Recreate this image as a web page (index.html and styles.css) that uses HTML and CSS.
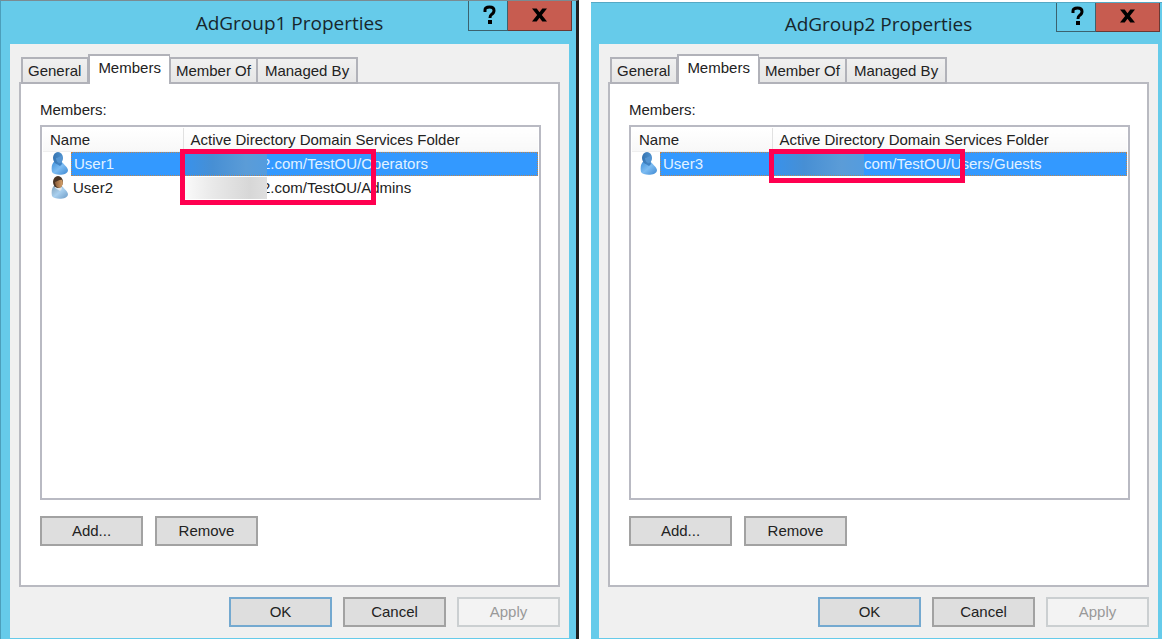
FILE: index.html
```html
<!DOCTYPE html>
<html lang="en">
<head>
<meta charset="utf-8">
<title>AdGroup Properties</title>
<link rel="stylesheet" href="styles.css">
</head>
<body>
<svg width="0" height="0" class="defs" aria-hidden="true">
  <defs>
    <linearGradient id="blueBody" x1="0" y1="0" x2="1" y2="1"><stop offset="0" stop-color="#3f8fd8"/><stop offset="0.5" stop-color="#7dbcf2"/><stop offset="1" stop-color="#3d88d2"/></linearGradient>
    <linearGradient id="blueHead" x1="0" y1="0" x2="1" y2="0"><stop offset="0" stop-color="#3573b0"/><stop offset="1" stop-color="#4f92cf"/></linearGradient>
    <linearGradient id="paleBody" x1="0" y1="0" x2="1" y2="1"><stop offset="0" stop-color="#7e9db5"/><stop offset="0.5" stop-color="#a9d0ef"/><stop offset="1" stop-color="#6d9bc6"/></linearGradient>
    <linearGradient id="skin" x1="0" y1="0" x2="1" y2="0"><stop offset="0" stop-color="#8a5c38"/><stop offset="1" stop-color="#d9a46c"/></linearGradient>
    <symbol id="user-blue" viewBox="0 0 17 23">
      <path d="M1 20C0 15 1 11 4 9H10C12 12 16 14 17 18C17 24 3 24 1 20Z" fill="url(#blueBody)"/>
      <path d="M4 9H10L11 12L9 14L4 11Z" fill="#3f82c4"/>
      <ellipse cx="7" cy="6" rx="5" ry="6" fill="url(#blueHead)"/>
      <path d="M5 6C7 6 9 4 11 4C12 7 11 10 9 11C7 11 5 9 5 6Z" fill="#5595d2"/>
    </symbol>
    <symbol id="user-color" viewBox="0 0 17 23">
      <path d="M1 20C0 15 1 11 4 9H10C12 12 16 14 17 18C17 24 3 24 1 20Z" fill="url(#paleBody)"/>
      <path d="M4 10H10L11 13L9 15L4 12Z" fill="#dfe8ee"/>
      <ellipse cx="7" cy="6" rx="5" ry="6" fill="#4a3525"/>
      <path d="M4 6C6 6 9 3 11 4C13 7 11 11 9 12C6 12 4 9 4 6Z" fill="url(#skin)"/>
    </symbol>
  </defs>
</svg>
<main class="desktop">
  <section class="window window-first" aria-labelledby="title1">
    <header class="titlebar">
      <h1 class="title" id="title1">AdGroup1 Properties</h1>
      <div class="caption">
        <button class="cap help" type="button" aria-label="Help"><svg width="13" height="20" viewBox="0 0 13 20"><path d="M2 7V5Q2 2 6.500 2Q11 2 11 5.500Q11 8 8.500 9.500Q7 10.500 7 13" fill="none" stroke="#000" stroke-width="3"/><rect x="5" y="15" width="4" height="4"/></svg></button>
        <button class="cap close" type="button" aria-label="Close"><svg width="15" height="14" viewBox="0 0 16 14"><path d="M0 0H5L8 4L11 0H16L10.500 7L16 14H11L8 10L5 14H0L5.500 7Z"/></svg></button>
      </div>
    </header>
    <div class="client">
      <nav class="tabs" aria-label="Property pages">
        <button class="tab" type="button">General</button>
        <button class="tab active" type="button">Members</button>
        <button class="tab" type="button">Member Of</button>
        <button class="tab" type="button">Managed By</button>
      </nav>
      <div class="panel">
        <h2 class="label">Members:</h2>
        <div class="list">
          <table class="members">
            <thead><tr><th class="name-col">Name</th><th>Active Directory Domain Services Folder</th></tr></thead>
            <tbody>
              <tr class="selected"><td class="name-cell"><div class="name"><svg class="icon" aria-hidden="true"><use href="#user-blue"/></svg><span class="text">User1</span></div></td><td><div class="folder"><span class="redact blue"></span><span class="tuck">2.com/TestOU/Operators</span></div></td></tr>
              <tr><td class="name-cell"><div class="name"><svg class="icon" aria-hidden="true"><use href="#user-color"/></svg><span class="text">User2</span></div></td><td><div class="folder"><span class="redact gray"></span><span class="tuck">2.com/TestOU/Admins</span></div></td></tr>
            </tbody>
          </table>
          <div class="mark mark-two"></div>
        </div>
        <div class="actions">
          <button class="btn" type="button">Add...</button>
          <button class="btn" type="button">Remove</button>
        </div>
      </div>
      <footer class="footer">
        <button class="btn default" type="button">OK</button>
        <button class="btn" type="button">Cancel</button>
        <button class="btn" type="button" disabled>Apply</button>
      </footer>
    </div>
  </section>
  <section class="window window-second" aria-labelledby="title2">
    <header class="titlebar">
      <h1 class="title" id="title2">AdGroup2 Properties</h1>
      <div class="caption">
        <button class="cap help" type="button" aria-label="Help"><svg width="13" height="20" viewBox="0 0 13 20"><path d="M2 7V5Q2 2 6.500 2Q11 2 11 5.500Q11 8 8.500 9.500Q7 10.500 7 13" fill="none" stroke="#000" stroke-width="3"/><rect x="5" y="15" width="4" height="4"/></svg></button>
        <button class="cap close" type="button" aria-label="Close"><svg width="15" height="14" viewBox="0 0 16 14"><path d="M0 0H5L8 4L11 0H16L10.500 7L16 14H11L8 10L5 14H0L5.500 7Z"/></svg></button>
      </div>
    </header>
    <div class="client">
      <nav class="tabs" aria-label="Property pages">
        <button class="tab" type="button">General</button>
        <button class="tab active" type="button">Members</button>
        <button class="tab" type="button">Member Of</button>
        <button class="tab" type="button">Managed By</button>
      </nav>
      <div class="panel">
        <h2 class="label">Members:</h2>
        <div class="list">
          <table class="members">
            <thead><tr><th class="name-col">Name</th><th>Active Directory Domain Services Folder</th></tr></thead>
            <tbody>
              <tr class="selected"><td class="name-cell"><div class="name"><svg class="icon" aria-hidden="true"><use href="#user-blue"/></svg><span class="text">User3</span></div></td><td><div class="folder"><span class="redact blue wide"></span><span>com/TestOU/Users/Guests</span></div></td></tr>
            </tbody>
          </table>
          <div class="mark mark-one"></div>
        </div>
        <div class="actions">
          <button class="btn" type="button">Add...</button>
          <button class="btn" type="button">Remove</button>
        </div>
      </div>
      <footer class="footer">
        <button class="btn default" type="button">OK</button>
        <button class="btn" type="button">Cancel</button>
        <button class="btn" type="button" disabled>Apply</button>
      </footer>
    </div>
  </section>
</main>
</body>
</html>
```

FILE: styles.css
```css
* { box-sizing: border-box; }

body {
  margin: 0;
  background: #fff;
  color: #222;
  font: 15px/18px "Liberation Sans", Arial, sans-serif;
}

button { font: inherit; color: inherit; }

.defs { position: absolute; }

.desktop {
  display: grid;
  grid-template-columns: 579fr 571fr;
  column-gap: 12px;
  min-height: 100vh;
}

.window {
  display: flex;
  flex-direction: column;
  background: #66cbea;
}

.window-first {
  border-top: 1px solid #7a8b92;
  border-left: 1px solid #4c9fbb;
  border-right: 3px solid #1f1f1f;
  padding: 0 7px 1px 9px;
}

.window-second {
  margin-top: 2px;
  border-top: 1px solid #55a9c5;
  padding: 0 4px 1px 8px;
}

.titlebar {
  display: grid;
  grid-template-columns: minmax(102px, 1fr) auto minmax(102px, 1fr);
  height: 43px;
}

.window-second .titlebar { height: 41px; }

.title {
  grid-column: 2;
  margin: 0;
  align-self: center;
  font: 19px/28px "Open Sans", "Noto Sans", sans-serif;
  color: #17262c;
}

.caption {
  display: flex;
  justify-self: end;
  height: 30px;
}

.window-first .caption { margin-right: -3px; }
.window-second .caption { margin-right: -2px; height: 29px; }

.cap {
  display: flex;
  align-items: center;
  justify-content: center;
  padding: 0 0 2px;
  border: 1px solid #3b626f;
  border-top: 0;
  background: #66cbea;
}

.help { width: 40px; padding-left: 2px; }
.close { width: 64px; border-color: #6b3833; border-left: 0; background: #c75c50; }

.client {
  flex: 1;
  display: flex;
  flex-direction: column;
  padding: 10px 9px 11px;
  background: #f0f0f0;
}

.tabs {
  position: relative;
  display: flex;
  align-items: flex-end;
  padding-left: 2px;
  margin-bottom: -2px;
}

.tab {
  height: 27px;
  padding: 0 5px;
  border: 2px solid #b1b2b9;
  border-right-width: 1px;
  border-left-width: 1px;
  background: linear-gradient(#f0f0f0, #e6e6e6);
  white-space: nowrap;
}

.tab:first-child { padding: 0 6px 0 5px; border-left-width: 2px; }
.tab:last-child { padding: 0 7px; border-right-width: 2px; }

.tab.active {
  height: 30px;
  padding: 0 8px 4px;
  border-bottom: 0;
  border-left-width: 2px;
  background: #fff;
}

.panel {
  flex: 1;
  display: flex;
  flex-direction: column;
  padding: 17px 17px 39px 19px;
  border: 2px solid #b9bac1;
  background: #fff;
}

.label {
  margin: 0 0 6px;
  font-size: 15px;
  font-weight: 400;
  line-height: 18px;
}

.list {
  position: relative;
  flex: 1;
  padding: 1px;
  border: 2px solid #b9bac3;
  background: #fff;
}

.members {
  width: 100%;
  border-collapse: collapse;
  table-layout: fixed;
}

.members th {
  height: 23px;
  padding: 1px 0 0 7px;
  background: linear-gradient(#fff, #f8f8f8);
  border-bottom: 1px solid #efefef;
  font-weight: 400;
  text-align: left;
}

.members .name-col {
  width: 140px;
  border-right: 1px solid #e1e1e1;
}

.members td { height: 24px; padding: 0; }

.name, .folder {
  display: flex;
  align-items: center;
  height: 24px;
}

.icon { width: 17px; height: 23px; margin: 0 3px 0 8px; }

.name .text {
  flex: 1;
  height: 24px;
  padding-left: 2px;
  line-height: 24px;
}

.selected .text, .selected .folder {
  border: 1px dotted #bb8550;
  border-width: 1px 0;
  background: #3399ff;
  color: #e2f2ff;
  line-height: 22px;
}

.selected .text { border-left-width: 1px; }
.selected .folder { border-right-width: 1px; }

.redact {
  position: relative;
  z-index: 1;
  flex: none;
  width: 84px;
  height: 22px;
}

.wide { width: 92px; }
.blue { background: linear-gradient(90deg, #3792ed, #478fd4 35%, #5b9cd7 75%, #549cdf); }
.gray { background: linear-gradient(90deg, #fbfbfb, #e9e9e9 35%, #d7d7d7 80%, #dfdfdf); }

.tuck { margin-left: -5px; }

.mark {
  position: absolute;
  z-index: 2;
  top: 22px;
  left: 138px;
  width: 196px;
  border: 5px solid #ff0050;
}

.mark-two { height: 56px; }
.mark-one { height: 34px; }

.actions, .footer {
  display: flex;
  gap: 12px;
}

.actions { margin-top: 16px; }

.footer {
  justify-content: flex-end;
  gap: 11px;
  margin-top: 10px;
}

.btn {
  width: 103px;
  height: 30px;
  padding: 0;
  border: 2px solid #a2a2a2;
  background: #dedede;
}

.default { border-color: #74a9d0; }

.btn:disabled {
  border-color: #cbcfd1;
  background: #f3f3f3;
  color: #999;
}
```
